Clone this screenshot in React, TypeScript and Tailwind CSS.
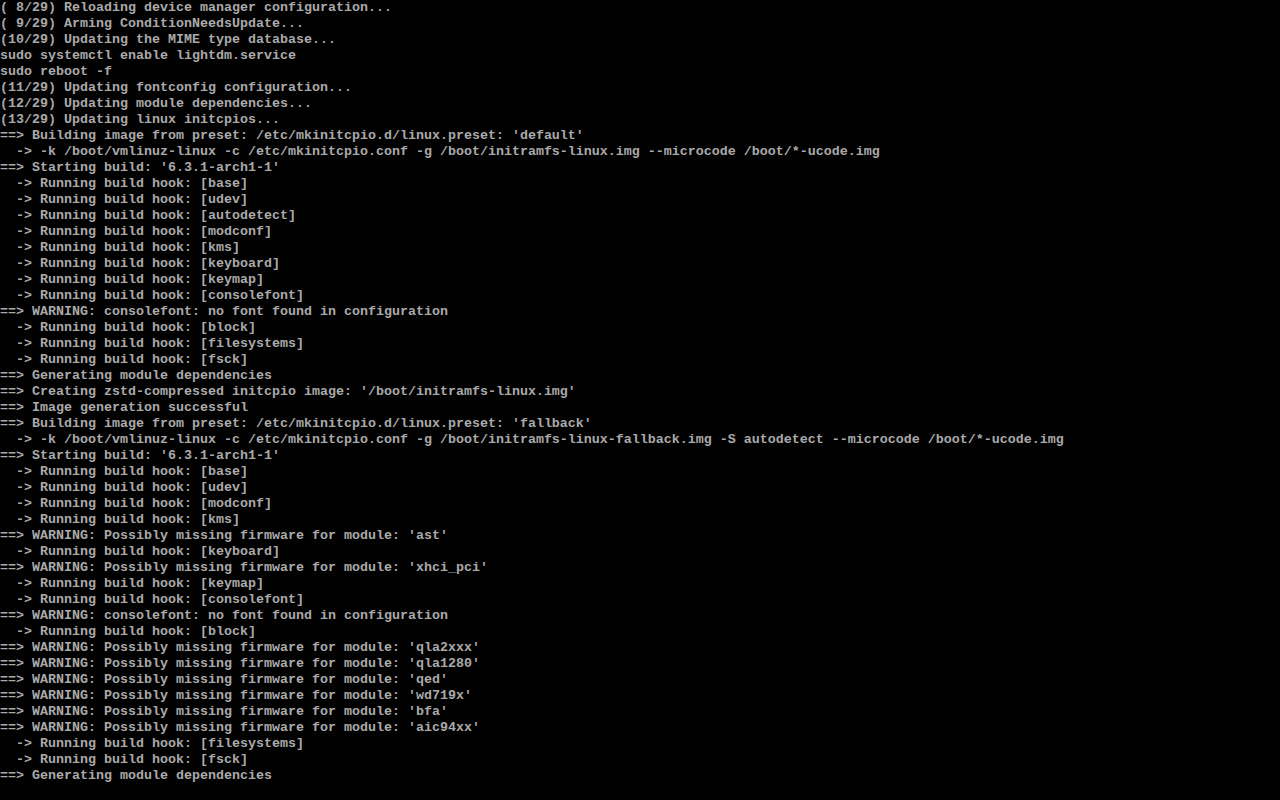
const lines = [
  "( 8/29) Reloading device manager configuration...",
  "( 9/29) Arming ConditionNeedsUpdate...",
  "(10/29) Updating the MIME type database...",
  "sudo systemctl enable lightdm.service",
  "sudo reboot -f",
  "(11/29) Updating fontconfig configuration...",
  "(12/29) Updating module dependencies...",
  "(13/29) Updating linux initcpios...",
  "==> Building image from preset: /etc/mkinitcpio.d/linux.preset: 'default'",
  "  -> -k /boot/vmlinuz-linux -c /etc/mkinitcpio.conf -g /boot/initramfs-linux.img --microcode /boot/*-ucode.img",
  "==> Starting build: '6.3.1-arch1-1'",
  "  -> Running build hook: [base]",
  "  -> Running build hook: [udev]",
  "  -> Running build hook: [autodetect]",
  "  -> Running build hook: [modconf]",
  "  -> Running build hook: [kms]",
  "  -> Running build hook: [keyboard]",
  "  -> Running build hook: [keymap]",
  "  -> Running build hook: [consolefont]",
  "==> WARNING: consolefont: no font found in configuration",
  "  -> Running build hook: [block]",
  "  -> Running build hook: [filesystems]",
  "  -> Running build hook: [fsck]",
  "==> Generating module dependencies",
  "==> Creating zstd-compressed initcpio image: '/boot/initramfs-linux.img'",
  "==> Image generation successful",
  "==> Building image from preset: /etc/mkinitcpio.d/linux.preset: 'fallback'",
  "  -> -k /boot/vmlinuz-linux -c /etc/mkinitcpio.conf -g /boot/initramfs-linux-fallback.img -S autodetect --microcode /boot/*-ucode.img",
  "==> Starting build: '6.3.1-arch1-1'",
  "  -> Running build hook: [base]",
  "  -> Running build hook: [udev]",
  "  -> Running build hook: [modconf]",
  "  -> Running build hook: [kms]",
  "==> WARNING: Possibly missing firmware for module: 'ast'",
  "  -> Running build hook: [keyboard]",
  "==> WARNING: Possibly missing firmware for module: 'xhci_pci'",
  "  -> Running build hook: [keymap]",
  "  -> Running build hook: [consolefont]",
  "==> WARNING: consolefont: no font found in configuration",
  "  -> Running build hook: [block]",
  "==> WARNING: Possibly missing firmware for module: 'qla2xxx'",
  "==> WARNING: Possibly missing firmware for module: 'qla1280'",
  "==> WARNING: Possibly missing firmware for module: 'qed'",
  "==> WARNING: Possibly missing firmware for module: 'wd719x'",
  "==> WARNING: Possibly missing firmware for module: 'bfa'",
  "==> WARNING: Possibly missing firmware for module: 'aic94xx'",
  "  -> Running build hook: [filesystems]",
  "  -> Running build hook: [fsck]",
  "==> Generating module dependencies",
];

export default function App() {
  return (
    <div className="w-[1280px] h-[800px] bg-black overflow-hidden">
      <pre className="m-0 font-['Liberation_Mono',monospace] font-bold text-[13.333px] leading-[16px] text-[#aaaaaa] whitespace-pre">
        {lines.map((l, i) => (
          <div key={i} className="h-[16px]">{l}</div>
        ))}
      </pre>
    </div>
  );
}
